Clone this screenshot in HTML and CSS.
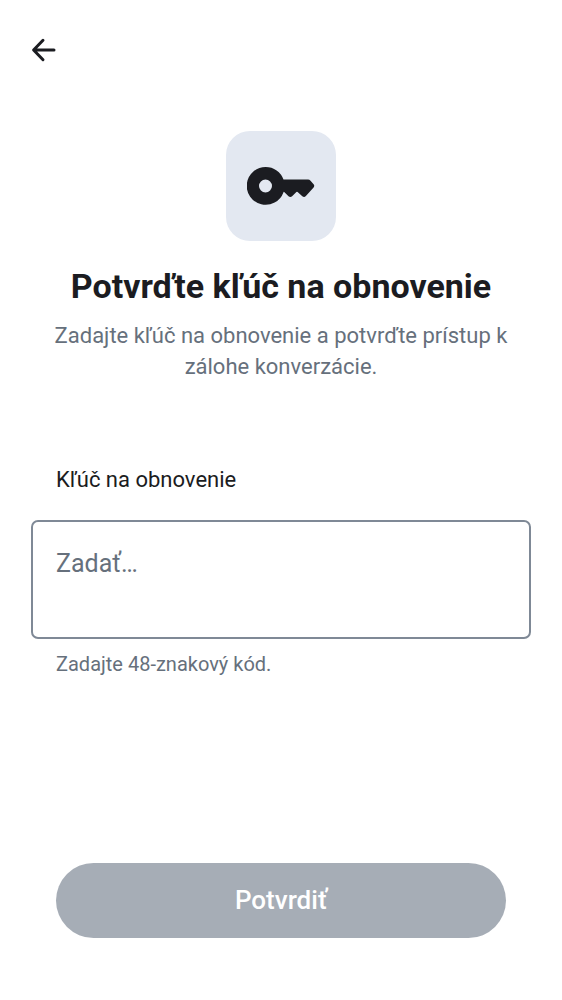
FILE: index.html
```html
<!DOCTYPE html>
<html lang="sk">
<head>
<meta charset="utf-8">
<meta name="viewport" content="width=device-width, initial-scale=1">
<title>Potvrďte kľúč na obnovenie</title>
<link rel="stylesheet" href="styles.css">
</head>
<body>
<main class="screen">
  <header class="topbar">
    <button class="back" type="button" aria-label="Späť">
      <svg class="back-icon" viewBox="0 0 26 26" aria-hidden="true"><path d="M12 3.300 2.600 13l9.400 9.700M3 13h20"/></svg>
    </button>
  </header>
  <section class="intro">
    <div class="badge">
      <svg class="key" viewBox="0 0 68 40" aria-hidden="true"><path fill-rule="evenodd" d="M18.700 1A18.900 18.900 0 0 1 36.500 13.600H61Q62.500 13.600 63.500 14.700L66.600 18.300Q67.900 19.800 66.600 21.400L58.900 30.100Q57.200 32 55.300 30.300L50.600 26Q50 25.500 49.400 26L45.100 30.300Q43.300 31.900 41.500 30.300L37.200 26Q36.600 25.600 36.400 26.400A18.900 18.900 0 1 1 18.700 1ZM18.500 13.500a6.500 6.500 0 1 0 0 13 6.500 6.500 0 0 0 0-13Z"/></svg>
    </div>
    <h1 class="title">Potvrďte kľúč na obnovenie</h1>
    <p class="lead">Zadajte kľúč na obnovenie a potvrďte prístup k zálohe konverzácie.</p>
  </section>
  <form class="form">
    <label class="label" for="recovery-key">Kľúč na obnovenie</label>
    <textarea class="field" id="recovery-key" placeholder="Zadať…" aria-describedby="key-hint"></textarea>
    <p class="hint" id="key-hint">Zadajte 48-znakový kód.</p>
    <button class="submit" type="submit" disabled>Potvrdiť</button>
  </form>
</main>
</body>
</html>
```
FILE: styles.css
```css
* { box-sizing: border-box; }
body { margin: 0; background: #fff; color: #1b1c21; font-family: Roboto, sans-serif; }
.screen { min-height: 100vh; display: flex; flex-direction: column; padding: 32px 31px 62px; }
.topbar { display: flex; }
.back { padding: 5px 0; border: 0; background: none; color: inherit; display: flex; }
.back-icon { width: 26px; height: 26px; fill: none; stroke: currentColor; stroke-width: 3; stroke-linecap: round; stroke-linejoin: round; }
.intro { display: flex; flex-direction: column; align-items: center; padding-top: 63px; text-align: center; }
.badge { display: grid; place-items: center; width: 110px; height: 110px; border-radius: 24px; background: #e3e8f1; }
.key { width: 68px; height: 40px; fill: currentColor; }
.title { margin: 23px 0 0; font-size: 34px; line-height: 44px; font-weight: 700; }
.lead { margin: 12px 0 0; font-size: 22px; line-height: 31px; color: #66707c; }
.form { flex: 1; display: flex; flex-direction: column; padding-top: 82px; }
.label { padding: 0 25px; font-size: 22px; line-height: 32px; }
.field { margin-top: 24px; height: 119px; padding: 26px 23px; border: 2px solid #7f8996; border-radius: 7px; background: #fff; color: inherit; font-family: inherit; font-size: 25px; line-height: 32px; resize: none; outline: 0; }
.field::placeholder { color: #66707c; opacity: 1; }
.hint { margin: 12px 0 0; padding: 0 25px; font-size: 20px; line-height: 26px; color: #66707c; }
.submit { margin: auto 25px 0; padding: 0 0 2px; height: 75px; border: 0; border-radius: 38px; background: #a6adb6; color: #fff; font-family: inherit; font-size: 26px; font-weight: 500; }
```
